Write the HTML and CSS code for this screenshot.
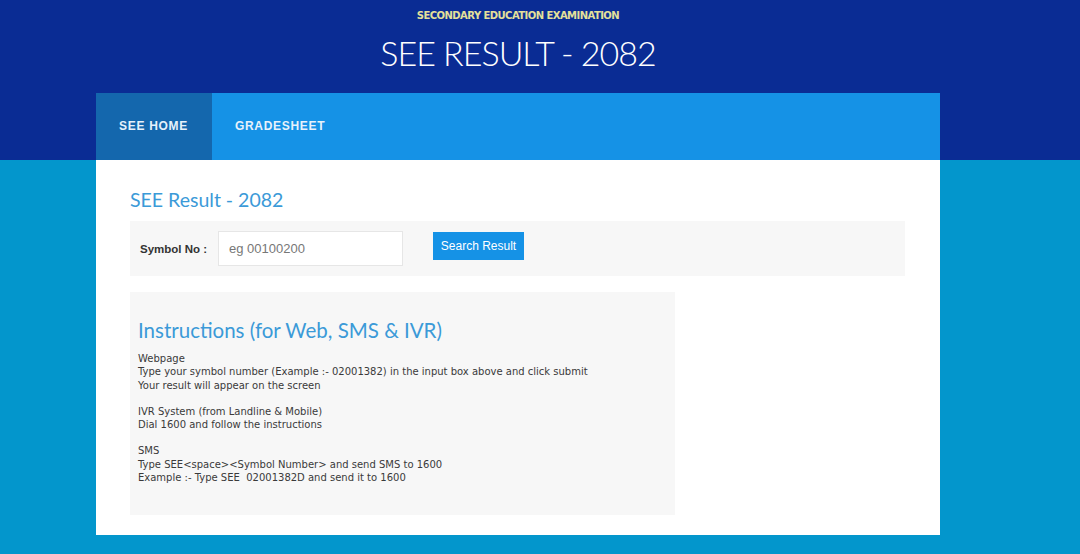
FILE: index.html
```html
<!DOCTYPE html>
<html>
<head>
<meta charset="utf-8">
<title>SEE Result - 2082</title>
<link rel="stylesheet" href="styles.css">
</head>
<body>
<div class="wrap">
  <header class="brand">
    <div class="kicker">SECONDARY EDUCATION EXAMINATION</div>
    <h1 class="title">SEE RESULT - 2082</h1>
  </header>
  <nav class="nav">
    <a class="tab active">SEE HOME</a>
    <a class="tab">GRADESHEET</a>
  </nav>
  <main class="card">
    <h2 class="page-title">SEE Result - 2082</h2>
    <form class="search">
      <label class="lbl">Symbol No :</label>
      <input class="field" type="text" placeholder="eg 00100200">
      <button class="btn" type="button">Search Result</button>
    </form>
    <div class="lower">
      <section class="instr">
        <h3 class="instr-title">Instructions (for Web, SMS &amp; IVR)</h3>
        <p class="para">Webpage<br>Type your symbol number (Example :- 02001382) in the input box above and click submit<br>Your result will appear on the screen</p>
        <p class="para">IVR System (from Landline &amp; Mobile)<br>Dial 1600 and follow the instructions</p>
        <p class="para">SMS<br>Type SEE&lt;space&gt;&lt;Symbol Number&gt; and send SMS to 1600<br>Example :- Type SEE&nbsp; 02001382D and send it to 1600</p>
      </section>
      <div class="side"></div>
    </div>
  </main>
</div>
</body>
</html>
```

FILE: styles.css
```css
html, body {
  margin: 0;
  padding: 0;
}
body {
  background: linear-gradient(to bottom, #0a2c94 0, #0a2c94 160px, #0396cc 160px, #0396cc 100%);
  min-height: 554px;
  font-family: "Liberation Sans", Arial, sans-serif;
}
.wrap {
  width: 844px;
  margin-left: 96px;
}
.brand {
  text-align: center;
  height: 93px;
  box-sizing: border-box;
  padding-top: 9px;
}
.kicker {
  color: #e4e09a;
  font-family: "DejaVu Sans", Verdana, sans-serif;
  font-weight: bold;
  font-size: 10px;
  letter-spacing: -0.55px;
  line-height: 13px;
}
.title {
  margin: 13px 0 0;
  color: #ffffff;
  font-family: Lato, "DejaVu Sans", sans-serif;
  font-weight: 300;
  font-size: 34px;
  line-height: 36px;
  letter-spacing: -1px;
}
.nav {
  display: flex;
  height: 67px;
  background: #1592e6;
}
.tab {
  display: flex;
  align-items: center;
  padding: 0 24px 0 23px;
  color: #e6f1fb;
  font-size: 12px;
  font-weight: bold;
  letter-spacing: 0.7px;
  padding-bottom: 2px;
}
.tab.active {
  background: #1467ad;
}
.card {
  background: #ffffff;
  padding: 28px 35px 20px 34px;
  height: 375px;
  box-sizing: border-box;
}
.page-title {
  margin: 0 0 9px;
  color: #3b9ad8;
  font-family: Lato, "DejaVu Sans", sans-serif;
  font-weight: 400;
  font-size: 19.5px;
  line-height: 24px;
  letter-spacing: 0px;
}
.search {
  display: flex;
  align-items: center;
  height: 55px;
  background: #f7f7f7;
  margin: 0;
  padding: 0 10px;
}
.lbl {
  font-size: 11.5px;
  font-weight: bold;
  color: #333;
  width: 78px;
}
.field {
  width: 185px;
  height: 35px;
  box-sizing: border-box;
  border: 1px solid #e6e6e6;
  background: #fff;
  padding: 0 10px;
  font-family: "Liberation Sans", Arial, sans-serif;
  font-size: 13px;
  color: #555;
  outline: none;
}
.field::placeholder {
  color: #777;
}
.btn {
  margin-left: 30px;
  width: 91px;
  height: 28px;
  margin-top: -5px;
  border: 0;
  background: #1592e6;
  color: #fff;
  font-family: "Liberation Sans", Arial, sans-serif;
  font-size: 12px;
  padding: 0;
}
.lower {
  display: flex;
  margin-top: 16px;
  height: 223px;
}
.instr {
  width: 545px;
  background: #f7f7f7;
  box-sizing: border-box;
  padding: 26px 8px 0;
}
.instr-title {
  margin: 0 0 10px;
  color: #3b9ad8;
  font-family: Lato, "DejaVu Sans", sans-serif;
  font-weight: 400;
  font-size: 20.5px;
  line-height: 24px;
  letter-spacing: 0px;
}
.para {
  margin: 0 0 13px;
  font-family: "DejaVu Sans", sans-serif;
  font-size: 10px;
  line-height: 13.3px;
  color: #3a3a3a;
}
.side {
  flex: 1;
}
```
